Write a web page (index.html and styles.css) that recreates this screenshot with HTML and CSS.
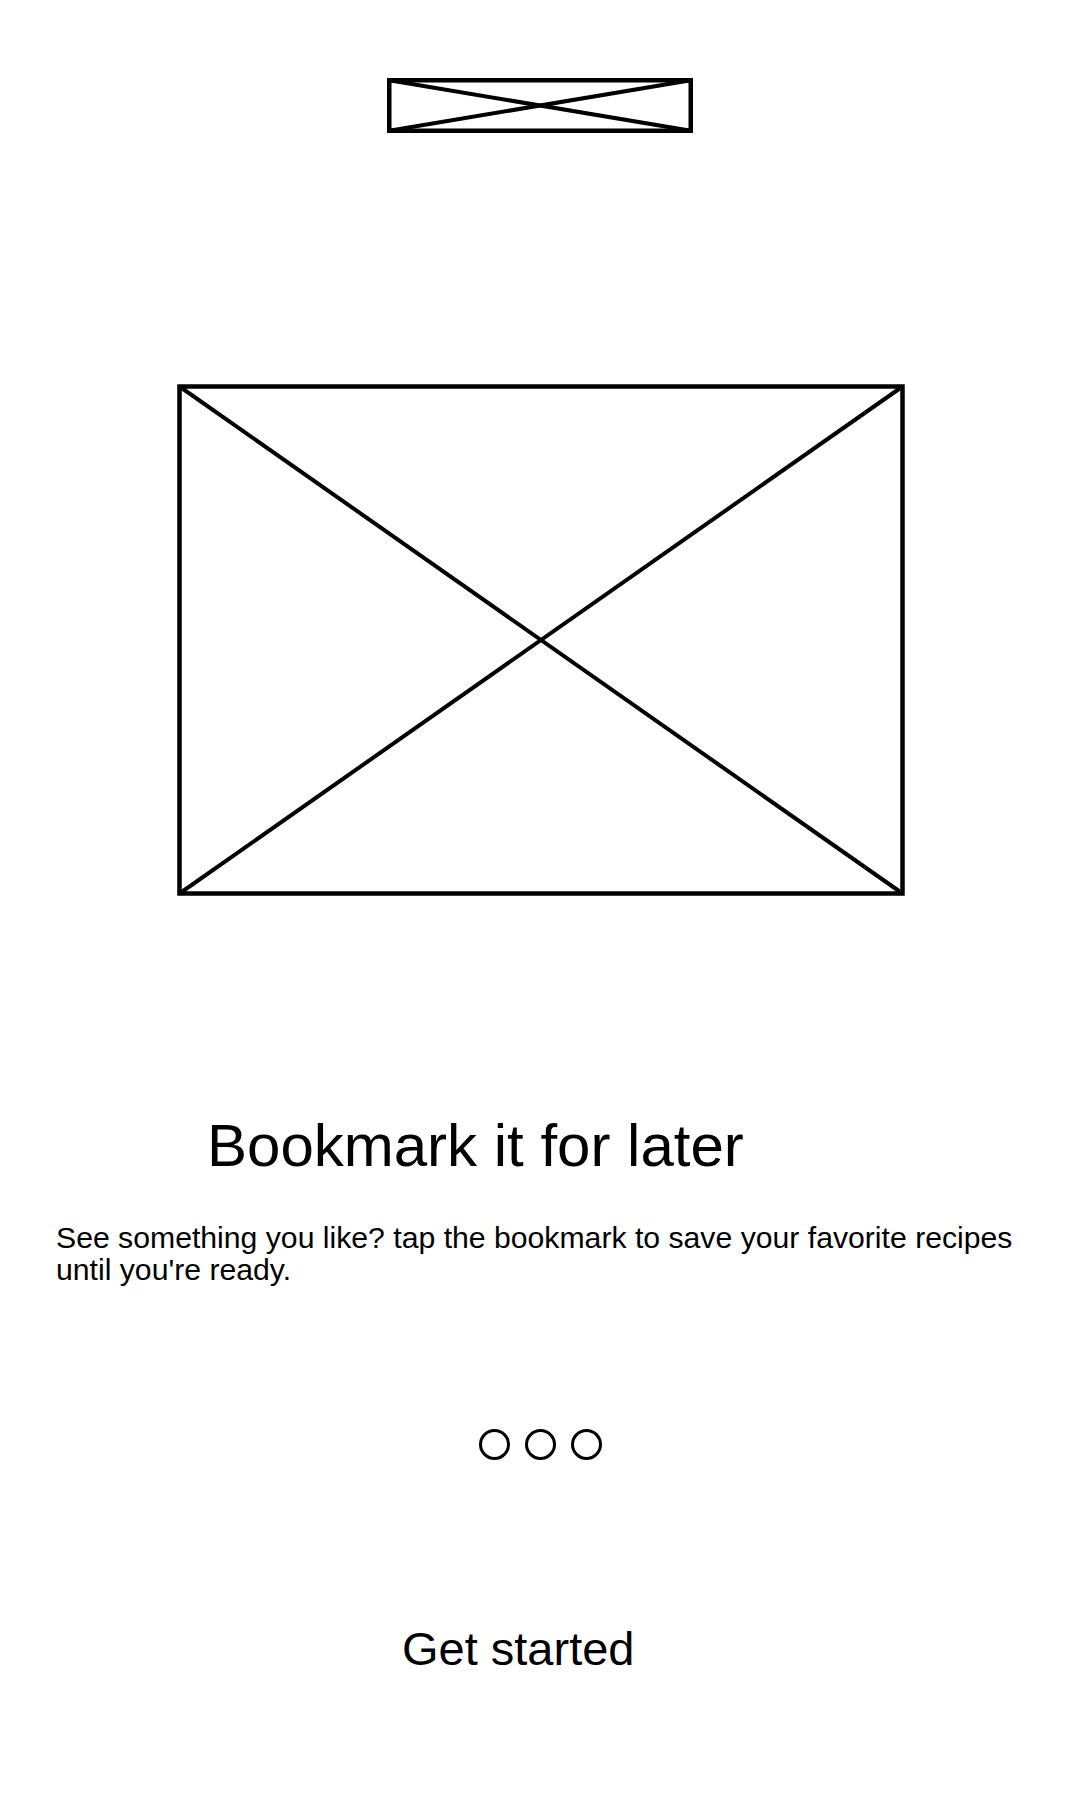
FILE: index.html
```html
<!DOCTYPE html>
<html lang="en">
<head>
    <meta charset="UTF-8">
    <meta name="viewport" content="width=device-width, initial-scale=1.0">
    <title>Bookmark it for later</title>
    <link rel="stylesheet" href="styles.css">
</head>
<body>
    <div class="screen">
        <!-- 顶部 logo 占位 -->
        <div class="logo">
            <svg width="306" height="55" viewBox="0 0 306 55">
                <rect x="2.25" y="2.25" width="301.5" height="50.5" fill="none" stroke="#000" stroke-width="4.5"/>
                <line x1="2.25" y1="2.25" x2="303.75" y2="52.75" stroke="#000" stroke-width="4"/>
                <line x1="303.75" y1="2.25" x2="2.25" y2="52.75" stroke="#000" stroke-width="4"/>
            </svg>
        </div>

        <!-- 插图占位 -->
        <div class="hero">
            <svg width="728" height="512" viewBox="0 0 728 512">
                <rect x="2.5" y="2.5" width="723" height="507" fill="none" stroke="#000" stroke-width="4.5"/>
                <line x1="2.5" y1="2.5" x2="725.5" y2="509.5" stroke="#000" stroke-width="4"/>
                <line x1="725.5" y1="2.5" x2="2.5" y2="509.5" stroke="#000" stroke-width="4"/>
            </svg>
        </div>

        <h1 class="title">Bookmark it for later</h1>
        <p class="text">See something you like? tap the bookmark to save your favorite recipes<br>until you're ready.</p>

        <div class="dots">
            <span class="dot"></span>
            <span class="dot"></span>
            <span class="dot"></span>
        </div>

        <button class="start">Get started</button>
    </div>
</body>
</html>
```

FILE: styles.css
```css
/* 全局样式 */
body {
    margin: 0;
    background: #fff;
    color: #000;
    font-family: "Liberation Sans", Arial, sans-serif;
}

.screen {
    width: 1080px;
    min-height: 1800px;
    display: flex;
    flex-direction: column;
}

/* 占位图 */
.logo {
    display: flex;
    justify-content: center;
    margin-top: 78px;
    height: 55px;
}

.hero {
    display: flex;
    justify-content: center;
    margin-top: 251px;
    margin-left: 2px;
    height: 512px;
}

svg {
    display: block;
}

/* 文字 */
.title {
    margin: 215px 0 0;
    padding-left: 207px;
    font-size: 60px;
    font-weight: normal;
    line-height: 69px;
}

.text {
    margin: 42px 0 0;
    padding-left: 56px;
    font-size: 30.2px;
    line-height: 32px;
}

/* 分页圆点 */
.dots {
    display: flex;
    justify-content: center;
    gap: 15px;
    margin-top: 143px;
}

.dot {
    width: 25px;
    height: 25px;
    border: 3px solid #000;
    border-radius: 50%;
}

/* 按钮 */
.start {
    align-self: flex-start;
    margin: 163px 0 0 402px;
    padding: 0;
    border: none;
    background: none;
    font-family: inherit;
    font-size: 47px;
    line-height: 52px;
    color: #000;
    cursor: pointer;
}
```
